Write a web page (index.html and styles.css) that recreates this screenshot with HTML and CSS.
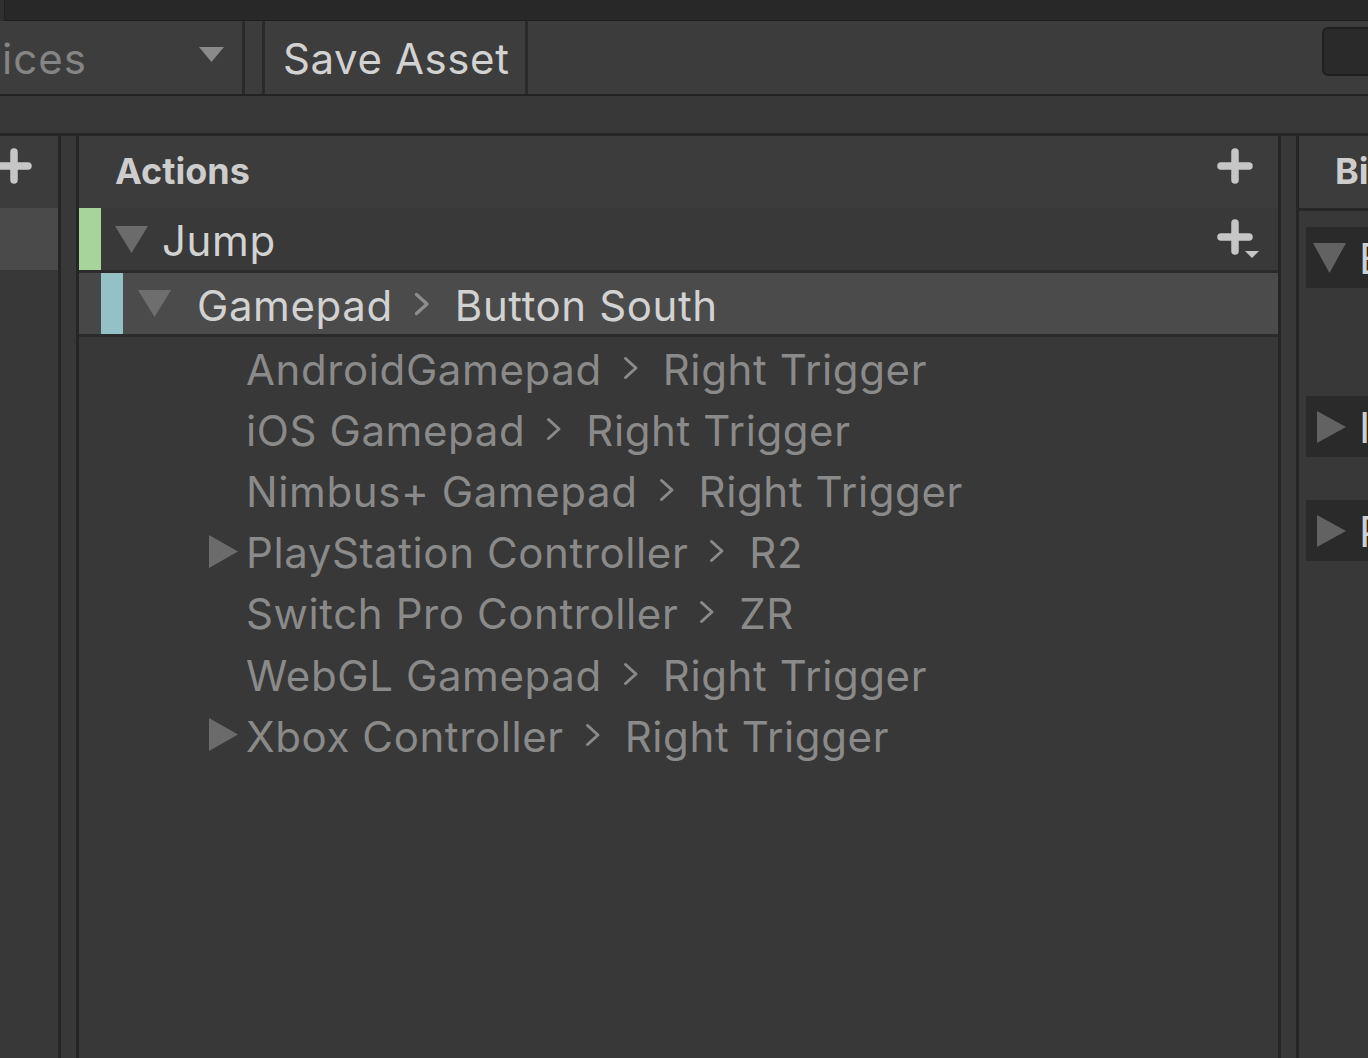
FILE: index.html
```html
<!DOCTYPE html>
<html lang="en">
<head>
<meta charset="utf-8">
<title>Input Actions</title>
<link rel="stylesheet" href="styles.css">
</head>
<body>
<div class="window">
  <div class="topbar"><div class="topbar-fill"></div></div>

  <div class="toolbar">
    <div class="dropdown">
      <span class="dd-label">ices</span>
      <svg class="dd-arrow" width="25" height="15" viewBox="0 0 25 15"><polygon points="0,0 25,0 12.5,15" fill="#8a8a8a"/></svg>
    </div>
    <div class="tb-sep"></div>
    <div class="tb-gap"></div>
    <div class="tb-sep"></div>
    <div class="tb-button">Save Asset</div>
    <div class="tb-sep"></div>
    <div class="tb-flex"></div>
    <div class="search"></div>
  </div>

  <div class="band"></div>

  <div class="panels">
    <section class="panel panel-maps">
      <div class="panel-header header-maps">
        <svg class="plus" width="36" height="36" viewBox="0 0 36 36"><path d="M18 4 V32 M4 18 H32" stroke="#c6c6c6" stroke-width="7.5" stroke-linecap="round" fill="none"/></svg>
      </div>
      <div class="map-row selected"></div>
    </section>

    <div class="gutter"></div>

    <section class="panel panel-actions">
      <div class="panel-header">
        <span class="header-title">Actions</span>
        <svg class="plus" width="36" height="36" viewBox="0 0 36 36"><path d="M18 4 V32 M4 18 H32" stroke="#c6c6c6" stroke-width="7.5" stroke-linecap="round" fill="none"/></svg>
      </div>

      <div class="tree-row action-row">
        <span class="bar bar-action"></span>
        <svg class="tri-down" width="33" height="27" viewBox="0 0 33 27"><polygon points="0,0 33,0 16.5,27" fill="#6b6b6b"/></svg>
        <span class="row-text primary jump-text">Jump</span>
        <span class="row-flex"></span>
        <svg class="plus-dd" width="44" height="40" viewBox="0 0 44 40"><path d="M18 4 V32 M4 18 H32" stroke="#c6c6c6" stroke-width="7.5" stroke-linecap="round" fill="none"/><polygon points="28,32 42,32 35,39" fill="#c6c6c6"/></svg>
      </div>

      <div class="tree-row binding-row">
        <span class="bar-spacer"></span>
        <span class="bar bar-binding"></span>
        <svg class="tri-down tri-binding" width="33" height="27" viewBox="0 0 33 27"><polygon points="0,0 33,0 16.5,27" fill="#6e6e6e"/></svg>
        <span class="row-text primary">Gamepad</span>
        <svg class="chev chev-primary" width="16" height="24" viewBox="0 0 16 24"><polyline points="2.5,2.5 13,12 2.5,21.5" fill="none" stroke="#8c8c8c" stroke-width="3.4" stroke-linecap="round" stroke-linejoin="round"/></svg>
        <span class="row-text primary">Button South</span>
      </div>

      <div class="children">
        <div class="child-row">
          <span class="tri-slot"></span>
          <span class="row-text dim">AndroidGamepad</span>
          <svg class="chev" width="16" height="24" viewBox="0 0 16 24"><polyline points="2.5,2.5 13,12 2.5,21.5" fill="none" stroke="#8a8a8a" stroke-width="3" stroke-linecap="round" stroke-linejoin="round"/></svg>
          <span class="row-text dim">Right Trigger</span>
        </div>
        <div class="child-row">
          <span class="tri-slot"></span>
          <span class="row-text dim">iOS Gamepad</span>
          <svg class="chev" width="16" height="24" viewBox="0 0 16 24"><polyline points="2.5,2.5 13,12 2.5,21.5" fill="none" stroke="#8a8a8a" stroke-width="3" stroke-linecap="round" stroke-linejoin="round"/></svg>
          <span class="row-text dim">Right Trigger</span>
        </div>
        <div class="child-row">
          <span class="tri-slot"></span>
          <span class="row-text dim">Nimbus+ Gamepad</span>
          <svg class="chev" width="16" height="24" viewBox="0 0 16 24"><polyline points="2.5,2.5 13,12 2.5,21.5" fill="none" stroke="#8a8a8a" stroke-width="3" stroke-linecap="round" stroke-linejoin="round"/></svg>
          <span class="row-text dim">Right Trigger</span>
        </div>
        <div class="child-row">
          <svg class="tri-slot" width="29" height="33" viewBox="0 0 29 33"><polygon points="0,0 29,16.5 0,33" fill="#6b6b6b"/></svg>
          <span class="row-text dim">PlayStation Controller</span>
          <svg class="chev" width="16" height="24" viewBox="0 0 16 24"><polyline points="2.5,2.5 13,12 2.5,21.5" fill="none" stroke="#8a8a8a" stroke-width="3" stroke-linecap="round" stroke-linejoin="round"/></svg>
          <span class="row-text dim">R2</span>
        </div>
        <div class="child-row">
          <span class="tri-slot"></span>
          <span class="row-text dim">Switch Pro Controller</span>
          <svg class="chev" width="16" height="24" viewBox="0 0 16 24"><polyline points="2.5,2.5 13,12 2.5,21.5" fill="none" stroke="#8a8a8a" stroke-width="3" stroke-linecap="round" stroke-linejoin="round"/></svg>
          <span class="row-text dim">ZR</span>
        </div>
        <div class="child-row">
          <span class="tri-slot"></span>
          <span class="row-text dim">WebGL Gamepad</span>
          <svg class="chev" width="16" height="24" viewBox="0 0 16 24"><polyline points="2.5,2.5 13,12 2.5,21.5" fill="none" stroke="#8a8a8a" stroke-width="3" stroke-linecap="round" stroke-linejoin="round"/></svg>
          <span class="row-text dim">Right Trigger</span>
        </div>
        <div class="child-row">
          <svg class="tri-slot" width="29" height="33" viewBox="0 0 29 33"><polygon points="0,0 29,16.5 0,33" fill="#6b6b6b"/></svg>
          <span class="row-text dim">Xbox Controller</span>
          <svg class="chev" width="16" height="24" viewBox="0 0 16 24"><polyline points="2.5,2.5 13,12 2.5,21.5" fill="none" stroke="#8a8a8a" stroke-width="3" stroke-linecap="round" stroke-linejoin="round"/></svg>
          <span class="row-text dim">Right Trigger</span>
        </div>
      </div>
    </section>

    <div class="gutter"></div>

    <section class="panel panel-props">
      <div class="panel-header header-props">
        <span class="header-title">Binding Properties</span>
      </div>
      <div class="props-body">
        <div class="foldout foldout-binding">
          <svg class="fold-tri-down" width="33" height="30" viewBox="0 0 33 30"><polygon points="0,0 33,0 16.5,30" fill="#626262"/></svg>
          <span class="fold-text">Binding</span>
        </div>
        <div class="foldout foldout-interactions">
          <svg class="fold-tri-right" width="29" height="32" viewBox="0 0 29 32"><polygon points="0,0 29,16 0,32" fill="#626262"/></svg>
          <span class="fold-text">Interactions</span>
        </div>
        <div class="foldout">
          <svg class="fold-tri-right" width="29" height="32" viewBox="0 0 29 32"><polygon points="0,0 29,16 0,32" fill="#626262"/></svg>
          <span class="fold-text">Processors</span>
        </div>
      </div>
    </section>
  </div>
</div>
</body>
</html>
```

FILE: styles.css
```css
* {
  box-sizing: border-box;
}

html, body {
  margin: 0;
  padding: 0;
}

body {
  width: 1368px;
  height: 1058px;
  overflow: hidden;
  background: #383838;
  font-family: Inter, "Noto Sans", "Liberation Sans", sans-serif;
}

.window {
  width: 1368px;
  height: 1058px;
  display: flex;
  flex-direction: column;
  overflow: hidden;
}

/* top dark strip */
.topbar {
  height: 21px;
  flex-shrink: 0;
  display: flex;
  background: #303030;
  padding-left: 4px;
}

.topbar-fill {
  flex: 1;
  background: #282828;
  border-bottom: 1px solid #1e1e1e;
  border-left: 1px solid #222;
}

/* toolbar */
.toolbar {
  height: 75px;
  flex-shrink: 0;
  display: flex;
  align-items: stretch;
  background: #3c3c3c;
  border-bottom: 2px solid #232323;
  overflow: hidden;
}

.dropdown {
  width: 242px;
  flex-shrink: 0;
  display: flex;
  align-items: center;
  padding-left: 2px;
  padding-right: 18px;
  background: #3d3d3d;
}

.dd-label {
  flex: 1;
  font-size: 42px;
  letter-spacing: 1px;
  color: #858585;
  line-height: 1;
  margin-top: 2px;
}

.dd-arrow {
  display: block;
  margin-top: -6px;
}

.tb-sep {
  width: 3px;
  flex-shrink: 0;
  background: #2a2a2a;
}

.tb-gap {
  width: 17px;
  flex-shrink: 0;
}

.tb-button {
  width: 260px;
  flex-shrink: 0;
  display: flex;
  align-items: center;
  padding-left: 18px;
  font-size: 42px;
  letter-spacing: 0.6px;
  color: #d2d2d2;
  background: #3d3d3d;
  padding-top: 1px;
  white-space: nowrap;
}

.tb-flex {
  flex: 1;
}

.search {
  width: 72px;
  flex-shrink: 0;
  margin: 6px -26px 18px 0;
  background: #2a2a2a;
  border: 2px solid #1f1f1f;
  border-radius: 6px;
}

/* band between toolbar and panels */
.band {
  height: 37px;
  flex-shrink: 0;
  background: #383838;
}

/* panels */
.panels {
  flex: 1;
  display: flex;
  border-top: 3px solid #262626;
  min-height: 0;
}

.gutter {
  width: 15px;
  flex-shrink: 0;
  background: #383838;
}

.panel {
  display: flex;
  flex-direction: column;
  background: #383838;
  overflow: hidden;
}

.panel-maps {
  width: 61px;
  flex-shrink: 0;
  border-right: 3px solid #252525;
}

.panel-actions {
  width: 1205px;
  flex-shrink: 0;
  border-left: 3px solid #252525;
  border-right: 3px solid #252525;
}

.panel-props {
  flex: 1;
  border-left: 3px solid #252525;
}

.panel-header {
  height: 72px;
  flex-shrink: 0;
  display: flex;
  align-items: center;
  background: #3c3c3c;
  padding-left: 36px;
  padding-right: 25px;
}

.header-maps {
  padding-left: 0;
  padding-right: 0;
}

.header-maps .plus {
  margin-left: -4px;
}

.header-title {
  flex: 1;
  font-weight: 700;
  font-size: 36px;
  color: #cdcdcd;
  white-space: nowrap;
  margin-top: -2px;
}

.plus {
  display: block;
  flex-shrink: 0;
  margin-top: -12px;
}

.map-row {
  height: 62px;
  flex-shrink: 0;
}

.map-row.selected {
  background: #4a4a4a;
}

/* tree rows */
.tree-row {
  height: 65px;
  flex-shrink: 0;
  display: flex;
  align-items: center;
  border-bottom: 3px solid #2b2b2b;
  white-space: nowrap;
}

.action-row {
  background: #393939;
  padding-right: 17px;
}

.binding-row {
  background: #4b4b4b;
  height: 64px;
}

.bar {
  width: 22px;
  align-self: stretch;
  flex-shrink: 0;
}

.bar-action {
  background: #a6d49b;
}

.bar-binding {
  background: #93c1c6;
}

.bar-spacer {
  width: 22px;
  align-self: stretch;
  flex-shrink: 0;
  background: #474747;
}

.tri-down {
  display: block;
  flex-shrink: 0;
  margin-left: 14px;
  margin-right: 14px;
}

.tri-binding {
  margin-left: 15px;
  margin-right: 26px;
}

.row-text {
  font-size: 42px;
  letter-spacing: 0.6px;
  line-height: 1;
  padding-top: 4px;
}

.primary {
  color: #d2d2d2;
}

.dim {
  color: #8a8a8a;
}

.row-flex {
  flex: 1;
}

.plus-dd {
  display: block;
  flex-shrink: 0;
}

.chev {
  display: block;
  flex-shrink: 0;
  margin: 0 24px 0 21px;
}

.chev-primary {
  margin: 0 25px 0 21px;
}

.children {
  display: flex;
  flex-direction: column;
}

.child-row {
  height: 61.2px;
  flex-shrink: 0;
  display: flex;
  align-items: center;
  padding-left: 130px;
  white-space: nowrap;
}

.tri-slot {
  display: block;
  width: 29px;
  height: 33px;
  flex-shrink: 0;
  margin-right: 8px;
}

/* binding properties */
.header-props {
  border-bottom: 3px solid #262626;
  height: 75px;
}

.props-body {
  display: flex;
  flex-direction: column;
  padding: 16px 0 0 7px;
}

.foldout {
  height: 61px;
  display: flex;
  align-items: center;
  background: #2a2a2a;
  white-space: nowrap;
  overflow: hidden;
}

.foldout-binding {
  margin-bottom: 108px;
}

.foldout-interactions {
  margin-bottom: 43px;
}

.fold-tri-down {
  display: block;
  flex-shrink: 0;
  margin-left: 7px;
  margin-right: 13px;
}

.fold-tri-right {
  display: block;
  flex-shrink: 0;
  margin-left: 11px;
  margin-right: 13px;
}

.fold-text {
  font-size: 42px;
  letter-spacing: 0.6px;
  color: #d0d0d0;
  line-height: 1;
  padding-top: 2px;
}
```
